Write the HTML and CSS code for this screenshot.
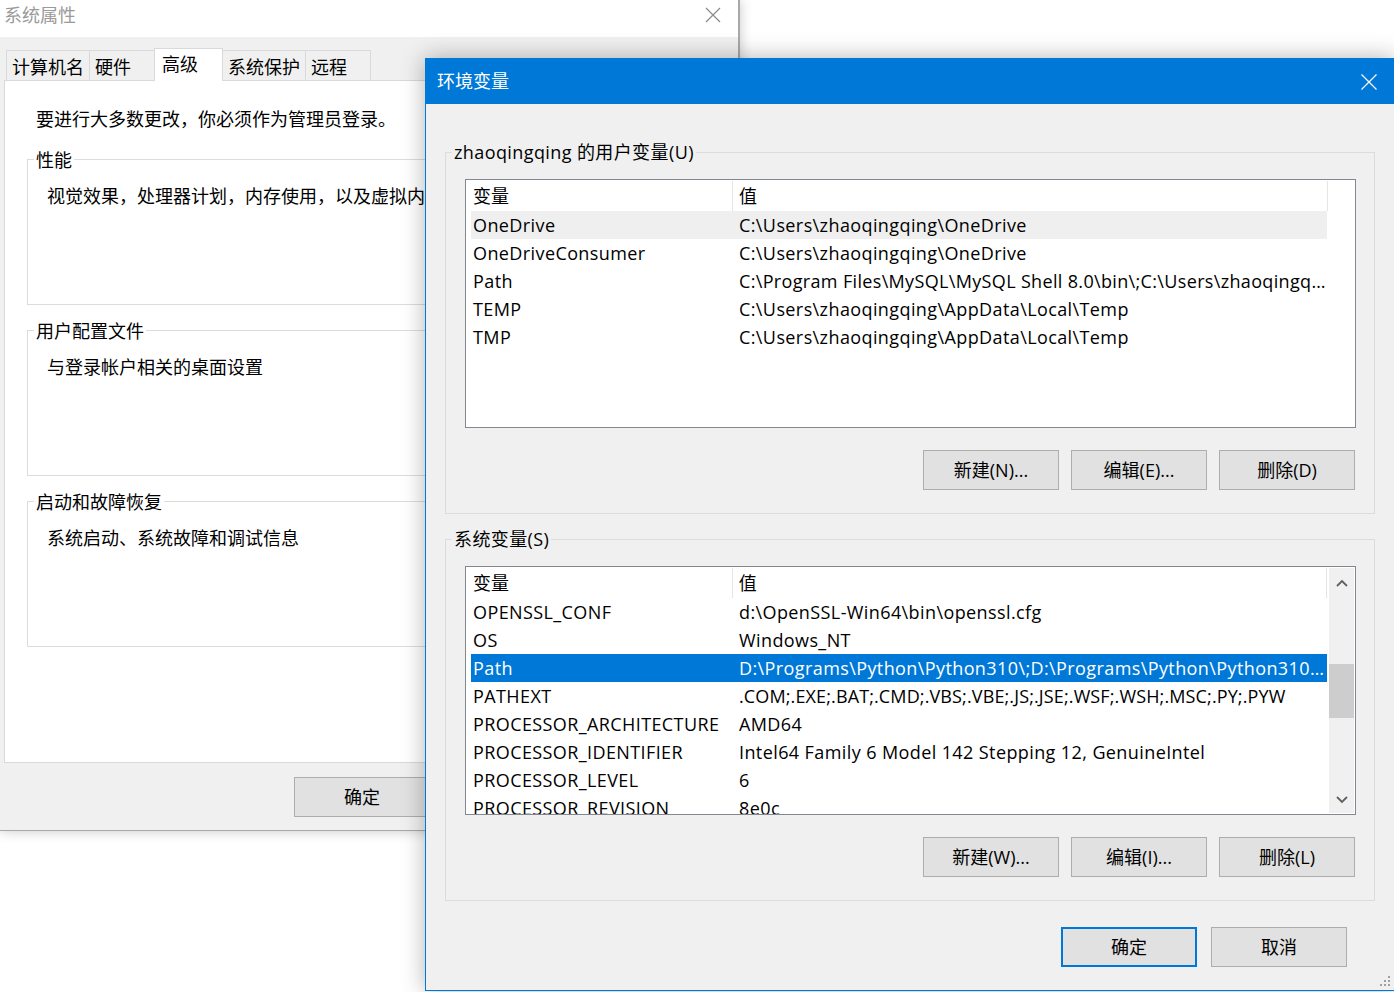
FILE: index.html
```html
<!DOCTYPE html>
<html lang="zh-CN">
<head>
<meta charset="utf-8">
<title>环境变量</title>
<link rel="stylesheet" href="styles.css">
</head>
<body>
<div class="desk">
  <section class="win sysprops">
    <header class="sp-title">
      <span class="sp-title-text">系统属性</span>
      <span class="sp-close"><svg width="16" height="16" viewBox="0 0 16 16"><path d="M1 1L15 15M15 1L1 15" stroke="#8a8a8a" stroke-width="1.2" fill="none"/></svg></span>
    </header>
    <div class="sp-body">
      <nav class="tabs">
        <div class="tab">计算机名</div>
        <div class="tab">硬件</div>
        <div class="tab active">高级</div>
        <div class="tab">系统保护</div>
        <div class="tab">远程</div>
      </nav>
      <div class="panel">
        <p class="notice">要进行大多数更改，你必须作为管理员登录。</p>
        <fieldset class="sp-group">
          <legend>性能</legend>
          <p>视觉效果，处理器计划，内存使用，以及虚拟内存</p>
        </fieldset>
        <fieldset class="sp-group">
          <legend>用户配置文件</legend>
          <p>与登录帐户相关的桌面设置</p>
        </fieldset>
        <fieldset class="sp-group">
          <legend>启动和故障恢复</legend>
          <p>系统启动、系统故障和调试信息</p>
        </fieldset>
      </div>
      <div class="sp-actions">
        <button class="btn">确定</button>
        <button class="btn">取消</button>
        <button class="btn">应用(A)</button>
      </div>
    </div>
  </section>

  <section class="win envvars">
    <header class="ev-title">
      <span class="ev-title-text">环境变量</span>
      <span class="ev-close"><svg width="16" height="16" viewBox="0 0 16 16"><path d="M0.5 0.5L15.5 15.5M15.5 0.5L0.5 15.5" stroke="#ffffff" stroke-width="1.2" fill="none"/></svg></span>
    </header>
    <div class="ev-body">
      <fieldset class="ev-group">
        <legend>zhaoqingqing 的用户变量(U)</legend>
        <div class="list">
          <div class="list-main">
            <div class="list-head">
              <div class="hcell c1">变量</div>
              <div class="hcell c2">值</div>
            </div>
            <div class="row focus"><div class="cell c1">OneDrive</div><div class="cell c2">C:\Users\zhaoqingqing\OneDrive</div></div>
            <div class="row"><div class="cell c1">OneDriveConsumer</div><div class="cell c2">C:\Users\zhaoqingqing\OneDrive</div></div>
            <div class="row"><div class="cell c1">Path</div><div class="cell c2 snug">C:\Program Files\MySQL\MySQL Shell 8.0\bin\;C:\Users\zhaoqingqing\AppData\Local\Microsoft\WindowsApps</div></div>
            <div class="row"><div class="cell c1">TEMP</div><div class="cell c2">C:\Users\zhaoqingqing\AppData\Local\Temp</div></div>
            <div class="row"><div class="cell c1">TMP</div><div class="cell c2">C:\Users\zhaoqingqing\AppData\Local\Temp</div></div>
          </div>
        </div>
        <div class="btn-row">
          <button class="btn">新建(N)...</button>
          <button class="btn">编辑(E)...</button>
          <button class="btn">删除(D)</button>
        </div>
      </fieldset>

      <fieldset class="ev-group">
        <legend>系统变量(S)</legend>
        <div class="list">
          <div class="list-main">
            <div class="list-head">
              <div class="hcell c1">变量</div>
              <div class="hcell c2">值</div>
            </div>
            <div class="row"><div class="cell c1">OPENSSL_CONF</div><div class="cell c2">d:\OpenSSL-Win64\bin\openssl.cfg</div></div>
            <div class="row"><div class="cell c1">OS</div><div class="cell c2">Windows_NT</div></div>
            <div class="row selected"><div class="cell c1">Path</div><div class="cell c2">D:\Programs\Python\Python310\;D:\Programs\Python\Python310\Scripts\;C:\Windows\system32</div></div>
            <div class="row"><div class="cell c1">PATHEXT</div><div class="cell c2 tight">.COM;.EXE;.BAT;.CMD;.VBS;.VBE;.JS;.JSE;.WSF;.WSH;.MSC;.PY;.PYW</div></div>
            <div class="row"><div class="cell c1">PROCESSOR_ARCHITECTURE</div><div class="cell c2">AMD64</div></div>
            <div class="row"><div class="cell c1">PROCESSOR_IDENTIFIER</div><div class="cell c2">Intel64 Family 6 Model 142 Stepping 12, GenuineIntel</div></div>
            <div class="row"><div class="cell c1">PROCESSOR_LEVEL</div><div class="cell c2">6</div></div>
            <div class="row"><div class="cell c1">PROCESSOR_REVISION</div><div class="cell c2">8e0c</div></div>
          </div>
          <div class="scrollbar">
            <div class="sb-btn sb-up"><svg width="12" height="8" viewBox="0 0 12 8"><path d="M1 7L6 2L11 7" stroke="#606060" stroke-width="1.8" fill="none"/></svg></div>
            <div class="sb-track"><div class="sb-thumb"></div></div>
            <div class="sb-btn sb-down"><svg width="12" height="8" viewBox="0 0 12 8"><path d="M1 1L6 6L11 1" stroke="#606060" stroke-width="1.8" fill="none"/></svg></div>
          </div>
        </div>
        <div class="btn-row">
          <button class="btn">新建(W)...</button>
          <button class="btn">编辑(I)...</button>
          <button class="btn">删除(L)</button>
        </div>
      </fieldset>

      <div class="ev-actions">
        <button class="btn default">确定</button>
        <button class="btn">取消</button>
      </div>
    </div>
    <span class="grip"><svg width="12" height="12" viewBox="0 0 12 12" fill="#a0a0a0"><rect x="8" y="0" width="2" height="2"/><rect x="4" y="4" width="2" height="2"/><rect x="8" y="4" width="2" height="2"/><rect x="0" y="8" width="2" height="2"/><rect x="4" y="8" width="2" height="2"/><rect x="8" y="8" width="2" height="2"/></svg></span>
  </section>
</div>
</body>
</html>
```

FILE: styles.css
```css
* { box-sizing: border-box; }
html, body { margin: 0; padding: 0; }
body {
  background: #ffffff;
  font-family: "Open Sans", "Noto Sans CJK SC", sans-serif;
  font-size: 18px;
  color: #000;
  width: 1394px;
  height: 992px;
  overflow: hidden;
}
.desk { position: relative; width: 1394px; height: 992px; overflow: hidden; }

.btn {
  font: inherit;
  font-size: 18px;
  line-height: 24px;
  width: 136px;
  height: 40px;
  padding: 0;
  background: #e1e1e1;
  border: 1px solid #adadad;
  color: #000;
}
.btn.default { border: 2px solid #0078d7; }

/* ---------- system properties window ---------- */
.sysprops {
  position: absolute;
  left: 0; top: 0;
  width: 740px; height: 831px;
  background: #f0f0f0;
  border-right: 2px solid #a8a8a8;
  border-bottom: 1px solid #a8a8a8;
  box-shadow: 0 0 12px rgba(0,0,0,0.22);
  display: flex;
  flex-direction: column;
}
.sp-title {
  height: 37px;
  background: #fff;
  display: flex;
  align-items: center;
  justify-content: space-between;
  padding-left: 4px;
}
.sp-title-text { color: #9a9a9a; line-height: 24px; font-family: "Noto Sans CJK SC", sans-serif; margin-top: -10px; }
.sp-close { width: 50px; height: 37px; display: flex; align-items: center; justify-content: center; margin-right: 0; padding-bottom: 8px; }
.sp-body { flex: 1; padding: 11px 0 0 4px; display: flex; flex-direction: column; }
.tabs { display: flex; align-items: flex-end; height: 32px; padding-left: 2px; position: relative; z-index: 1; }
.tab {
  height: 30px;
  min-width: 66px;
  padding: 2px 5px 0 5px;
  border: 1px solid #d9d9d9;
  border-bottom: none;
  margin-right: -1px;
  line-height: 26px;
  font-family: "Noto Sans CJK SC", sans-serif;
  background: #f0f0f0;
}
.tab.active {
  height: 33px;
  margin-bottom: -1px;
  background: #fff;
  padding: 0 5px 0 7px;
  line-height: 29px;
  min-width: 69px;
}
.panel {
  width: 726px;
  height: 683px;
  background: #fff;
  border: 1px solid #d9d9d9;
  padding: 0 4px;
  font-family: "Noto Sans CJK SC", sans-serif;
}
.notice { margin: 25px 0 17px 27px; line-height: 24px; }
.sp-group {
  margin: 13px 18px 0 18px;
  padding: 0;
  border: 1px solid #dcdcdc;
  min-width: 0;
}
.sp-group:first-of-type { margin-top: 0; }
.sp-group legend { margin-left: 6px; padding: 0 2px; line-height: 24px; }
.sp-group p { margin: 0; padding: 12px 0 0 19px; height: 121px; box-sizing: content-box; line-height: 24px; white-space: nowrap; overflow: hidden; }
.sp-actions { display: flex; justify-content: flex-end; gap: 13px; padding: 14px 10px 0 0; }

/* ---------- environment variables window ---------- */
.envvars {
  position: absolute;
  left: 425px; top: 58px;
  width: 970px; height: 933px;
  background: #f0f0f0;
  border: 1px solid #0078d7;
  box-shadow: 0 0 22px rgba(0,0,0,0.3);
  display: flex;
  flex-direction: column;
}
.ev-title {
  height: 45px;
  flex: none;
  background: #0078d7;
  color: #fff;
  display: flex;
  align-items: center;
  justify-content: space-between;
  padding-left: 11px;
}
.ev-title-text { line-height: 24px; font-family: "Noto Sans CJK SC", sans-serif; margin-top: -3px; }
.ev-close { width: 50px; height: 45px; display: flex; align-items: center; justify-content: center; }
.ev-body { padding: 36px 19px 0 19px; flex: 1; }
.ev-group {
  margin: 13px 0 0 0;
  padding: 15px 18px 23px 19px;
  border: 1px solid #dcdcdc;
  min-width: 0;
}
.ev-group:first-of-type { margin-top: 0; }
.ev-group legend { margin-left: -13px; padding: 0 2px; line-height: 24px; letter-spacing: 0.4px; }
.list {
  height: 249px;
  background: #fff;
  border: 1px solid #828790;
  display: flex;
  overflow: hidden;
}
.list-main { flex: 1; min-width: 0; overflow: hidden; }
.list-head { display: flex; height: 31px; }
.hcell { height: 30px; margin-top: 1px; line-height: 30px; border-right: 1px solid #e5e5e5; }
.hcell.c1 { width: 267px; padding-left: 7px; }
.hcell.c2 { width: 595px; padding-left: 6px; }
.row { display: flex; height: 28px; margin-left: 5px; width: 856px; line-height: 28px; }
.row.focus { background: #efefef; }
.row.selected { background: #0078d7; color: #fff; }
.cell { white-space: nowrap; overflow: hidden; text-overflow: ellipsis; letter-spacing: 0.4px; }
.cell.c1 { width: 261px; padding-left: 2px; }
.cell.c2 { width: 595px; padding-left: 7px; padding-right: 0; }
.cell.tight { letter-spacing: 0.12px; }
.cell.snug { letter-spacing: 0.34px; }
.scrollbar {
  width: 25px;
  margin: 1px 1px 1px 2px;
  background: #f0f0f0;
  display: flex;
  flex-direction: column;
  flex: none;
}
.sb-btn { display: flex; align-items: center; justify-content: center; flex: none; }
.sb-up { height: 30px; }
.sb-down { height: 26px; }
.sb-track { flex: 1; }
.sb-thumb { margin-top: 66px; height: 54px; background: #cdcdcd; }
.btn-row { display: flex; justify-content: flex-end; gap: 12px; margin-top: 22px; padding-right: 1px; }
.ev-actions { display: flex; justify-content: flex-end; gap: 14px; padding: 26px 28px 0 0; }
.grip { position: absolute; right: 2px; bottom: 2px; width: 12px; height: 12px; display: block; line-height: 0; }
```
